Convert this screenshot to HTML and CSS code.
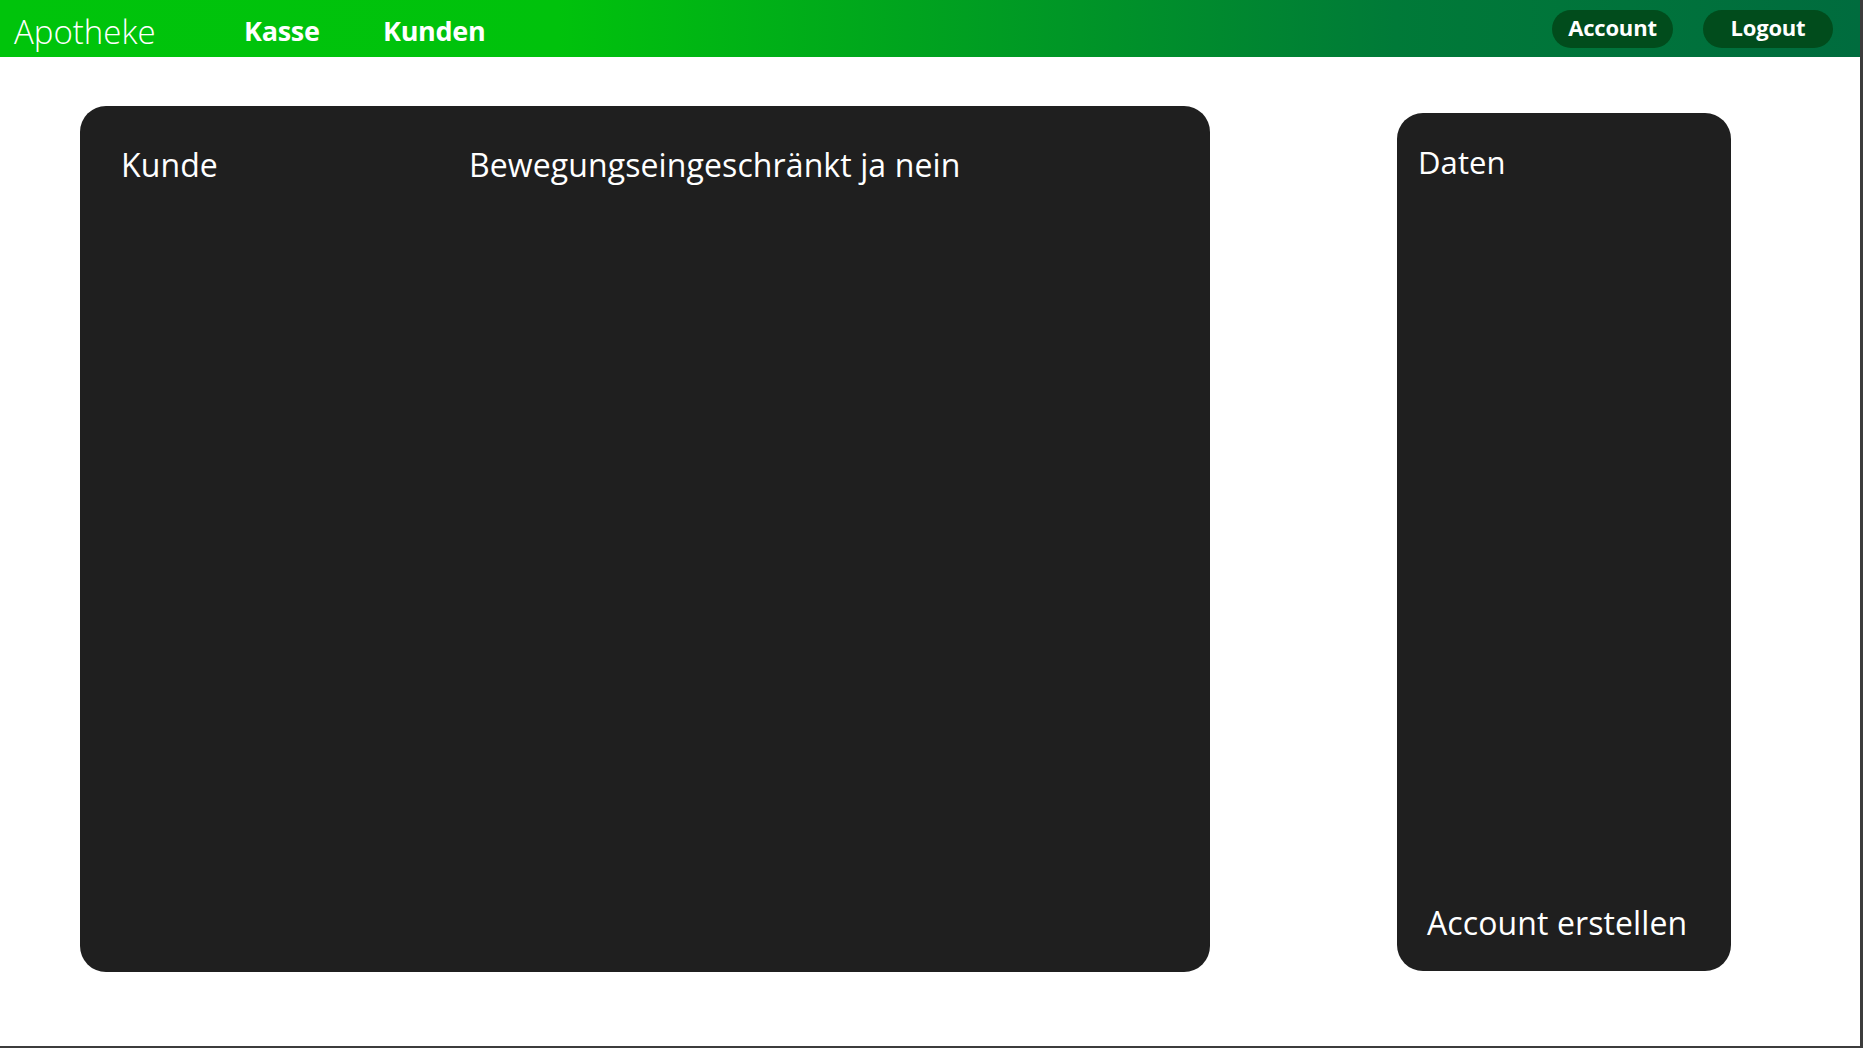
FILE: index.html
```html
<!DOCTYPE html>
<html lang="de">
<head>
<meta charset="utf-8">
<title>Apotheke</title>
<link rel="stylesheet" href="styles.css">
</head>
<body>
<div class="page">
  <header class="topbar">
    <div class="brand">Apotheke</div>
    <nav class="nav">
      <a class="nav-link nav-kasse" href="#">Kasse</a>
      <a class="nav-link" href="#">Kunden</a>
    </nav>
    <div class="actions">
      <button class="pill pill-account">Account</button>
      <button class="pill pill-logout">Logout</button>
    </div>
  </header>
  <main class="content">
    <section class="panel panel-main">
      <div class="main-head">
        <span class="col-kunde">Kunde</span>
        <span class="col-beweg">Bewegungseingeschränkt ja nein</span>
      </div>
    </section>
    <aside class="panel panel-side">
      <div class="side-title">Daten</div>
      <div class="side-action">Account erstellen</div>
    </aside>
  </main>
</div>
</body>
</html>
```
FILE: styles.css
```css
* { box-sizing: border-box; }
html, body { margin: 0; padding: 0; background: #ffffff; }
body { font-family: "Open Sans", "Noto Sans", sans-serif; }

.page {
  width: 1863px;
  height: 1048px;
  border-right: 3px solid #3c3c3c;
  border-bottom: 2px solid #3c3c3c;
  overflow: hidden;
  background: #ffffff;
}

.topbar {
  height: 57px;
  display: flex;
  align-items: center;
  background: linear-gradient(90deg, #00c40b 0%, #00c20c 30%, #009a24 55%, #007a38 75%, #006c3e 100%);
  color: #ffffff;
}

.brand {
  width: 244px;
  padding-left: 14px;
  font-size: 33px;
  font-weight: 300;
  letter-spacing: 0;
  line-height: 1;
  margin-top: 5px;
}

.nav { display: flex; align-items: center; margin-top: 4px; }
.nav-link {
  color: #ffffff;
  text-decoration: none;
  font-weight: 700;
  font-size: 27px;
  letter-spacing: -0.3px;
  line-height: 1;
}
.nav-kasse { width: 139px; }

.actions {
  margin-left: auto;
  display: flex;
  gap: 30px;
  padding-right: 27px;
  align-self: flex-start;
  padding-top: 10px;
}
.pill {
  height: 38px;
  border: none;
  border-radius: 19px;
  background: #014c1c;
  color: #ffffff;
  font-family: "Open Sans", "Noto Sans", sans-serif;
  font-weight: 700;
  font-size: 22px;
  letter-spacing: -0.2px;
  padding: 0 0 5px 0;
  line-height: 1;
}
.pill-account { width: 121px; }
.pill-logout { width: 130px; }

.content {
  display: flex;
  align-items: flex-start;
  padding-left: 80px;
}

.panel {
  background: #1f1f1f;
  color: #ffffff;
  border-radius: 26px;
}

.panel-main {
  width: 1130px;
  height: 866px;
  margin-top: 49px;
  padding: 39px 0 0 41px;
}
.main-head {
  display: flex;
  font-size: 32px;
  line-height: 40px;
  letter-spacing: 0.1px;
}
.col-kunde { width: 348px; }

.panel-side {
  width: 334px;
  height: 858px;
  margin-top: 56px;
  margin-left: 187px;
  display: flex;
  flex-direction: column;
  justify-content: space-between;
  padding: 30px 0 28px 21px;
  font-size: 31px;
  line-height: 38px;
  letter-spacing: 0.1px;
}
.side-action {
  padding-left: 9px;
  font-size: 32px;
  line-height: 40px;
  letter-spacing: 0.1px;
}
```
